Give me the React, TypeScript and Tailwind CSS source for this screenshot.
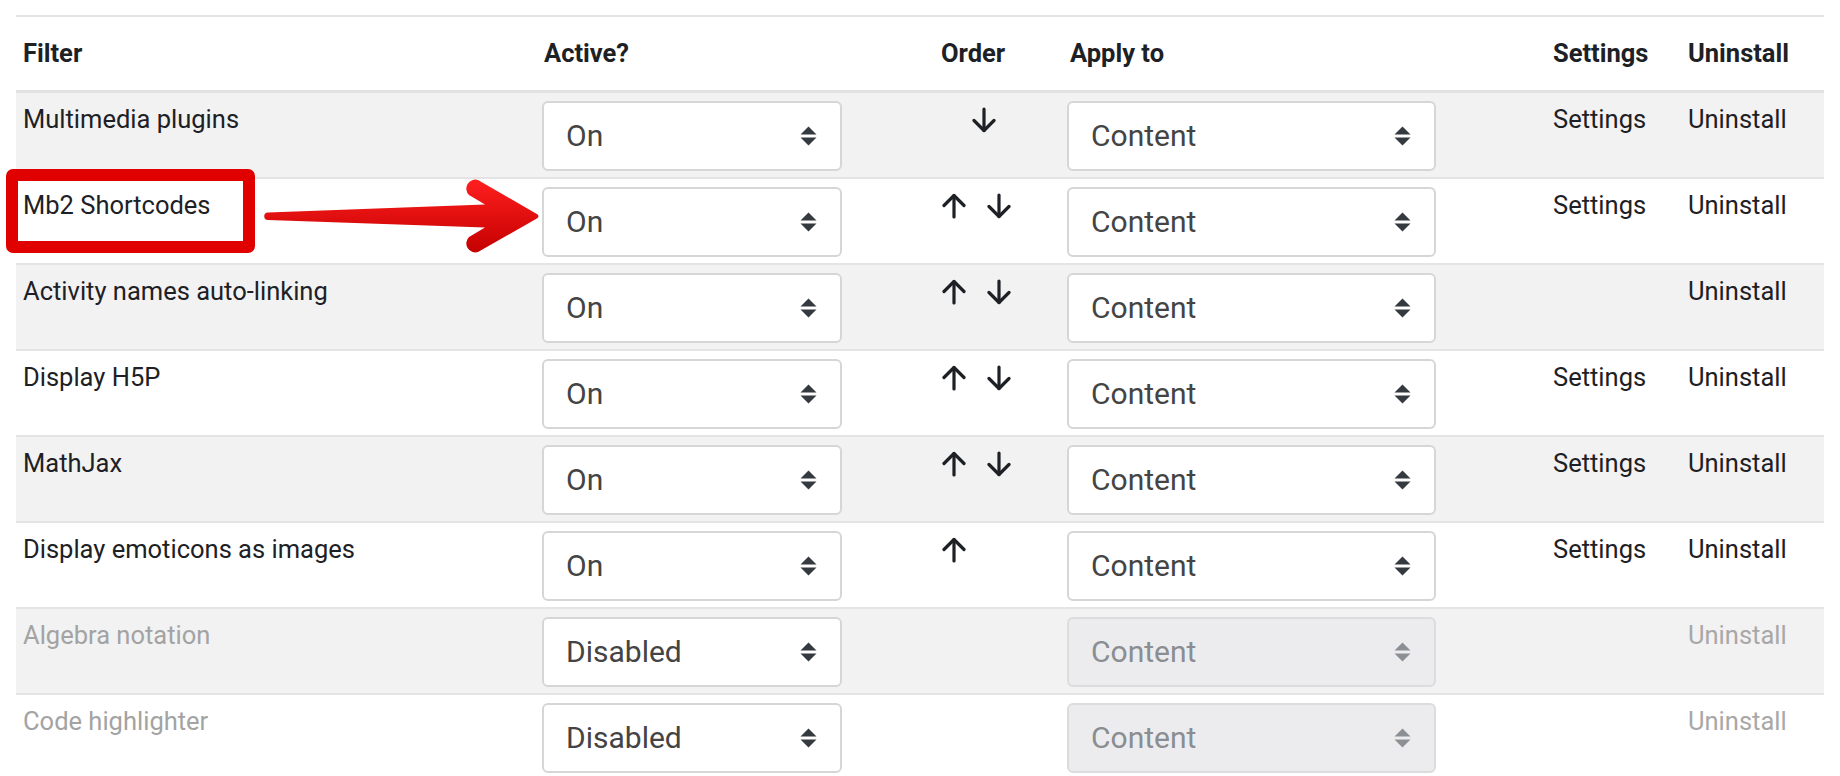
import React from 'react';

type Row = {
  name: string;
  active: string;
  up: boolean;
  down: boolean;
  settings: boolean;
  disabled: boolean;
};

const rows: Row[] = [
  { name: 'Multimedia plugins', active: 'On', up: false, down: true, settings: true, disabled: false },
  { name: 'Mb2 Shortcodes', active: 'On', up: true, down: true, settings: true, disabled: false },
  { name: 'Activity names auto-linking', active: 'On', up: true, down: true, settings: false, disabled: false },
  { name: 'Display H5P', active: 'On', up: true, down: true, settings: true, disabled: false },
  { name: 'MathJax', active: 'On', up: true, down: true, settings: true, disabled: false },
  { name: 'Display emoticons as images', active: 'On', up: true, down: false, settings: true, disabled: false },
  { name: 'Algebra notation', active: 'Disabled', up: false, down: false, settings: false, disabled: true },
  { name: 'Code highlighter', active: 'Disabled', up: false, down: false, settings: false, disabled: true },
];

const SortIcon = ({ muted }: { muted?: boolean }) => (
  <svg width="17" height="20" viewBox="0 0 17 20" className={muted ? 'text-[#8c8f93]' : 'text-[#343a40]'}>
    <path d="M8.5 0.5 16.5 8.5H0.5Z" fill="currentColor" />
    <path d="M0.5 11.5H16.5L8.5 19.5Z" fill="currentColor" />
  </svg>
);

const Arrow = ({ dir }: { dir: 'up' | 'down' }) => (
  <svg width="24" height="26" viewBox="0 0 24 26" fill="none" stroke="#1d2125" strokeWidth="3.2" strokeLinecap="round" strokeLinejoin="round">
    {dir === 'up' ? (
      <>
        <path d="M12 2.5V24" />
        <path d="M2 12.5 12 2.5 22 12.5" />
      </>
    ) : (
      <>
        <path d="M12 2V23.5" />
        <path d="M2 13.5 12 23.5 22 13.5" />
      </>
    )}
  </svg>
);

const Select = ({ value, width, muted }: { value: string; width: string; muted?: boolean }) => (
  <div
    className={`${width} h-[70px] rounded-[6px] border-2 flex items-center justify-between pl-[22px] pr-[23px] text-[30px] leading-none ${
      muted ? 'bg-[#ececee] border-[#dcdcdc] text-[#8a8d91]' : 'bg-white border-[#d6d6d6] text-[#444]'
    }`}
  >
    <span>{value}</span>
    <SortIcon muted={muted} />
  </div>
);

const OrderCell = ({ row, first }: { row: Row; first: boolean }) => {
  if (first) {
    return (
      <div className="flex pt-[6px] pl-[31px]">
        <Arrow dir="down" />
      </div>
    );
  }
  return (
    <div className="flex gap-[21px] pt-[6px] pl-[1px]">
      {row.up && <Arrow dir="up" />}
      {row.down && <Arrow dir="down" />}
    </div>
  );
};

export default function App() {
  return (
    <div className="relative w-[1840px] h-[776px] overflow-hidden bg-white font-['Roboto',sans-serif] text-[#1d2125]">
      <div className="ml-[16px] mt-[15px] w-[1808px] border-t-2 border-[#e4e4e4]">
        {/* header */}
        <div className="flex h-[76px] items-center border-b-[3px] border-[#e2e2e2] text-[25.5px] font-bold">
          <div className="w-[519px] pl-[7px]">Filter</div>
          <div className="w-[399px] pl-[9px]">Active?</div>
          <div className="w-[126px] pl-[7px]">Order</div>
          <div className="w-[486px] pl-[10px]">Apply to</div>
          <div className="w-[135px] pl-[7px]">Settings</div>
          <div className="w-[143px] pl-[7px]">Uninstall</div>
        </div>

        {rows.map((row, i) => (
          <div
            key={row.name}
            className={`flex h-[86px] border-b-2 border-[#e4e4e4] text-[25.5px] leading-[37px] ${
              i % 2 === 0 ? 'bg-[#f2f2f2]' : 'bg-white'
            }`}
          >
            <div className={`w-[519px] pl-[7px] pt-[8px] ${row.disabled ? 'text-[#a3a3a3]' : ''}`}>{row.name}</div>
            <div className="w-[399px] pl-[7px] pt-[8px]">
              <Select value={row.active} width="w-[300px]" />
            </div>
            <div className="w-[126px] pl-[7px] pt-[8px]">
              <OrderCell row={row} first={i === 0} />
            </div>
            <div className="w-[486px] pl-[7px] pt-[8px]">
              <Select value="Content" width="w-[369px]" muted={row.disabled} />
            </div>
            <div className="w-[135px] pl-[7px] pt-[8px]">{row.settings ? 'Settings' : ''}</div>
            <div className={`w-[143px] pl-[7px] pt-[8px] ${row.disabled ? 'text-[#a8a8a8]' : ''}`}>Uninstall</div>
          </div>
        ))}
      </div>

      {/* annotation: red frame */}
      <div className="absolute left-[6px] top-[169px] w-[249px] h-[84px] rounded-[7px] border-[12px] border-[#e00000]" />

      {/* annotation: red arrow */}
      <svg className="absolute left-0 top-0 pointer-events-none" width="1840" height="776" viewBox="0 0 1840 776">
        <defs>
          <linearGradient id="arrowFill" x1="0" y1="0" x2="0" y2="1">
            <stop offset="0" stopColor="#ff1f1f" />
            <stop offset="1" stopColor="#c40000" />
          </linearGradient>
        </defs>
        <path
          d="M268 212.5 L485 204.5 L469 195 A9 9 0 0 1 478 180 L536 213.5 Q541 216 536 219 L478 252 A9 9 0 0 1 469 237 L485 227.5 L268 220 A3.75 3.75 0 0 1 268 212.5 Z"
          fill="url(#arrowFill)"
        />
      </svg>
    </div>
  );
}
